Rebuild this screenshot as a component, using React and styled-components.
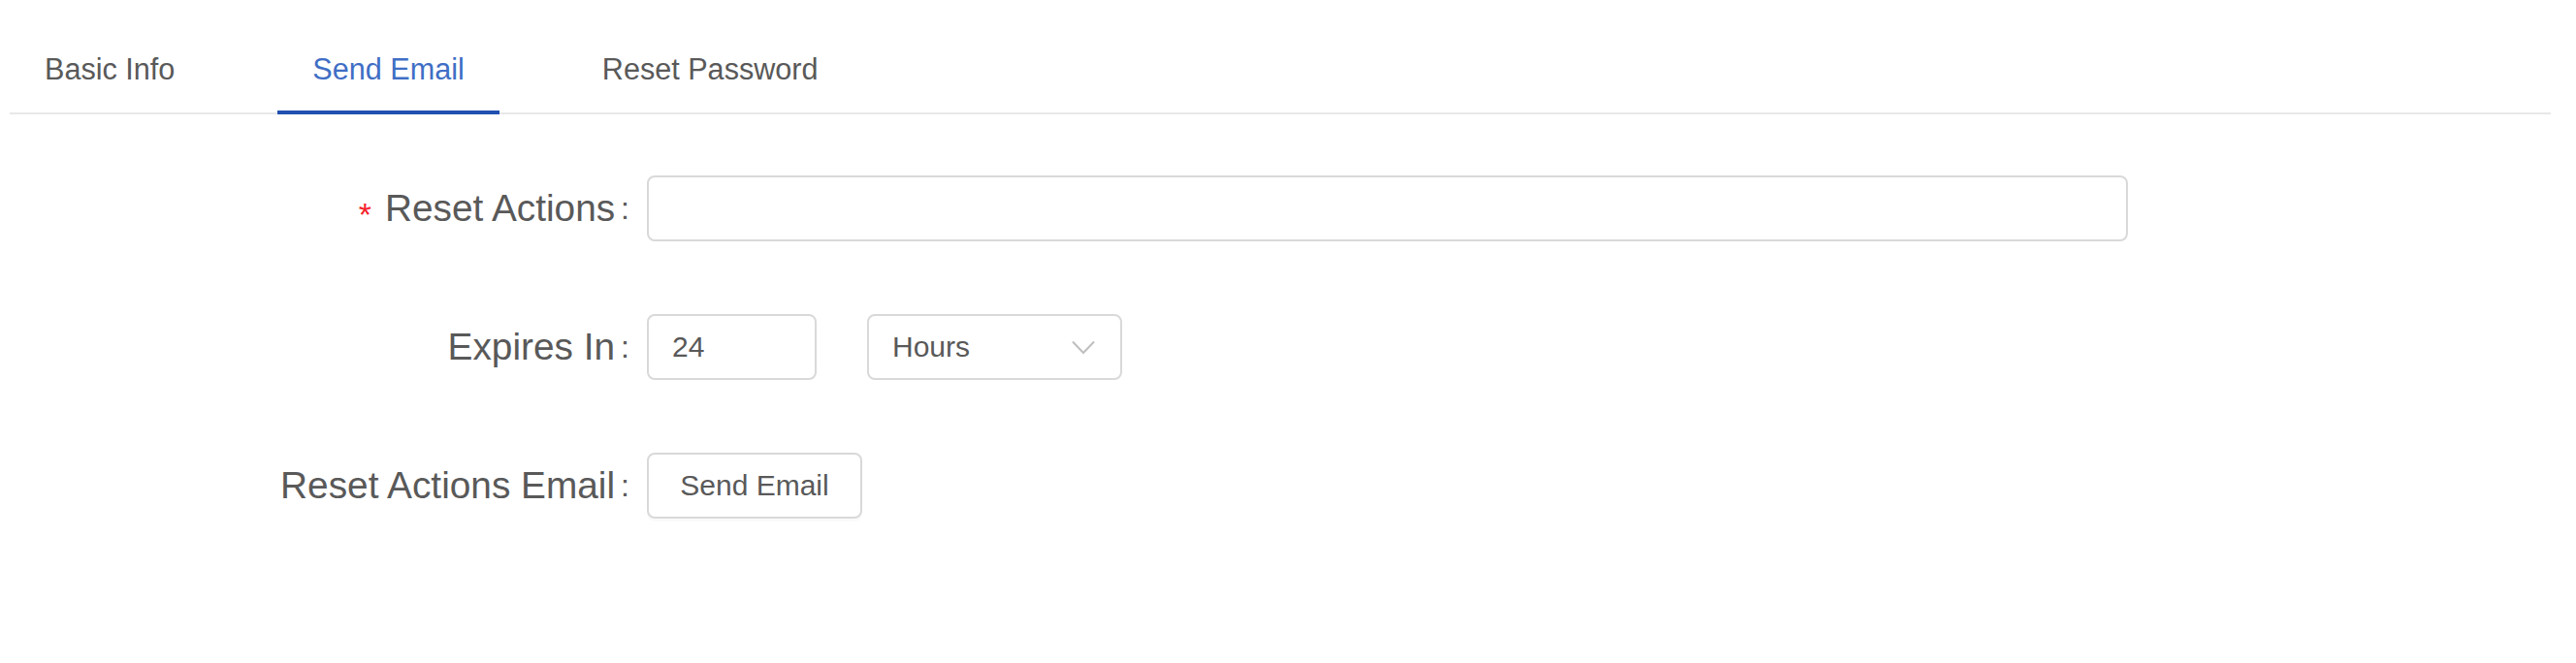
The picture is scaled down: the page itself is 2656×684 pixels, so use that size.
import styled, { createGlobalStyle } from "styled-components";

const GlobalStyle = createGlobalStyle`
  html, body {
    margin: 0;
    padding: 0;
    background: #ffffff;
  }
  body {
    font-family: "Liberation Sans", Arial, sans-serif;
    color: #595959;
  }
`;

const tabs = ["Basic Info", "Send Email", "Reset Password"];

function Chevron() {
  return (
    <svg width="24" height="15" viewBox="0 0 24 15" fill="none">
      <path d="M1 1.5 L12 13 L23 1.5" stroke="#bfbfbf" strokeWidth="2" />
    </svg>
  );
}

export default function App() {
  return (
    <Page>
      <GlobalStyle />
      <TabList>
        {tabs.map((t) => (
          <Tab key={t} $active={t === "Send Email"}>
            {t}
          </Tab>
        ))}
      </TabList>

      <Form>
        <Label>
          <Required>*</Required>
          Reset Actions<Colon>:</Colon>
        </Label>
        <Field>
          <TextInput $width="1527px" />
        </Field>

        <Label>
          Expires In<Colon>:</Colon>
        </Label>
        <Field>
          <TextInput $width="175px" defaultValue="24" />
          <Select>
            <span>Hours</span>
            <Chevron />
          </Select>
        </Field>

        <Label>
          Reset Actions Email<Colon>:</Colon>
        </Label>
        <Field>
          <Button>Send Email</Button>
        </Field>
      </Form>
    </Page>
  );
}

const Page = styled.div`
  width: 2656px;
  height: 684px;
  box-sizing: border-box;
  padding: 0 26px 0 10px;
  background: #fff;
`;

const TabList = styled.div`
  display: flex;
  gap: 70px;
  border-bottom: 2px solid #e8e8e8;
`;

const Tab = styled.div`
  position: relative;
  padding: 49px 36px 22px;
  font-size: 30.6px;
  line-height: 45px;
  color: ${({ $active }) => ($active ? "#3f6ec5" : "#595959")};
  white-space: nowrap;

  &::after {
    content: "";
    display: ${({ $active }) => ($active ? "block" : "none")};
    position: absolute;
    left: 0;
    right: 0;
    bottom: -2px;
    height: 4px;
    background: #2150b0;
  }
`;

const Form = styled.div`
  display: grid;
  grid-template-columns: 639px 1fr;
  grid-auto-rows: 68px;
  column-gap: 18px;
  row-gap: 75px;
  margin-top: 63px;
`;

const Label = styled.div`
  display: flex;
  align-items: center;
  justify-content: flex-end;
  font-size: 38.8px;
  color: #595959;
  white-space: nowrap;
`;

const Required = styled.span`
  color: #f5222d;
  font-size: 34px;
  margin-right: 14px;
  position: relative;
  top: 6px;
`;

const Colon = styled.span`
  font-size: 32px;
  margin-left: 6px;
`;

const Field = styled.div`
  display: flex;
  align-items: center;
  gap: 52px;
`;

const TextInput = styled.input`
  box-sizing: border-box;
  width: ${({ $width }) => $width};
  height: 68px;
  padding: 0 24px;
  border: 2px solid #d9d9d9;
  border-radius: 8px;
  font-family: "Liberation Sans", Arial, sans-serif;
  font-size: 30px;
  color: #595959;
  background: #fff;
  outline: none;
`;

const Select = styled.div`
  box-sizing: border-box;
  width: 263px;
  height: 68px;
  padding: 0 26px 0 24px;
  border: 2px solid #d9d9d9;
  border-radius: 8px;
  display: flex;
  align-items: center;
  justify-content: space-between;
  font-size: 30px;
  color: #595959;
`;

const Button = styled.button`
  box-sizing: border-box;
  width: 222px;
  height: 68px;
  border: 2px solid #d9d9d9;
  border-radius: 8px;
  background: #fff;
  box-shadow: 0 3px 0 rgba(0, 0, 0, 0.02);
  font-family: "Liberation Sans", Arial, sans-serif;
  font-size: 30px;
  color: #595959;
  padding: 0;
  cursor: pointer;
`;
